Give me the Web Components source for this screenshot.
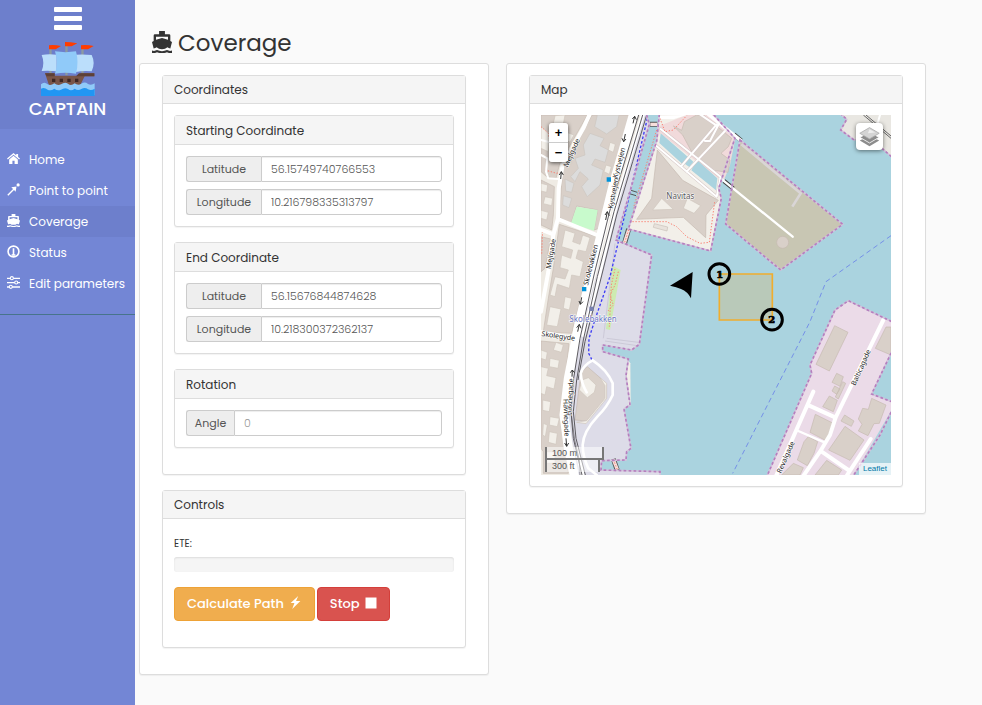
<!DOCTYPE html>
<html lang="en">
<head>
<meta charset="utf-8">
<meta name="viewport" content="width=device-width, initial-scale=1">
<title>Captain – Coverage</title>
<style>
body { margin: 0; background: #fafafa; color: #333; font: 12px/18px Poppins, Inter, "Open Sans", sans-serif; }
</style>
</head>
<body>
<captain-app></captain-app>
<script>
const define = (name, html, setup) => {
  const template = document.createElement('template');
  template.innerHTML = '<style>*{box-sizing:border-box}</style>' + html;
  customElements.define(name, class extends HTMLElement {
    constructor() {
      super();
      this.attachShadow({ mode: 'open' }).append(template.content.cloneNode(true));
    }
    connectedCallback() { if (setup) setup(this, this.shadowRoot); }
  });
};

const ICONS = {
  home: '<path d="M12 2 0 12l1.600 2L12 5.200 22.400 14 24 12l-3.500-3V3.500h-3.500v2.600z"/><path d="M12 7 4 13.800V22h6v-6h4v6h6v-8.200z"/>',
  route: '<path d="M1.500 22.500 13 11" stroke="currentColor" stroke-width="2.500"/><path d="M8 8l9.500-1.500L16 16z"/><circle cx="20.500" cy="3.500" r="3"/>',
  boat: '<path d="M8.500 0h7v3.500h5q1.500 0 1.500 1.500v6l2 1-2 7q-2 0-3.500-1.200Q16 20 12 20t-6.500-2.200Q4 19 2 19l-2-7 2-1V5q0-1.500 1.500-1.500h5zM4.800 6.200v3.300L12 7.500l7.200 2V6.200z" fill-rule="evenodd"/><path d="M0 21.300q3 1 6-.5 6 2.500 12 0 3 1.500 6 .5V24q-3 .5-6-.8-6 2-12 0-3 1.300-6 .8z"/>',
  status: '<circle cx="12" cy="12" r="10" fill="none" stroke="currentColor" stroke-width="3"/><path d="M10.500 6h3v11h-3zM8.500 17h7v3h-7z"/>',
  sliders: '<path d="M0 3h24v2.500H0zM0 11h24v2.500H0zM0 19h24v2.500H0z"/><g fill="#7386d5" stroke="currentColor" stroke-width="2"><circle cx="9" cy="4" r="2.800"/><circle cx="17" cy="12" r="2.800"/><circle cx="7" cy="20" r="2.800"/></g>',
  bolt: '<path d="M17 0 3 13h7L6 24 21 9h-8z"/>',
  stop: '<path d="M1 1h22v22H1z"/>'
};

define('ui-icon', `
<style>
:host { display: inline-block; width: 13px; height: 13px; flex: none; }
svg { display: block; width: 100%; height: 100%; fill: currentColor; }
</style><svg viewBox="0 0 24 24" preserveAspectRatio="none" aria-hidden="true"></svg>`,
(host, root) => { root.querySelector('svg').innerHTML = ICONS[host.getAttribute('name')] || ''; });

define('side-link', `
<style>
:host { display: block; }
a { display: flex; align-items: center; gap: 9px; height: 31px; padding: 0 7px; color: #fff; text-decoration: none; font-size: 12px; white-space: nowrap; }
:host([active]) a { background: #6d7fcc; }
::slotted(ui-icon) { margin-bottom: 2px; }
</style><a href="#"><slot name="icon"></slot><span><slot></slot></span></a>`,
(host, root) => { if (host.hasAttribute('active')) root.querySelector('a').setAttribute('aria-current', 'page'); });

define('side-bar', `
<style>
:host { display: block; background: #7386d5; color: #fff; }
header { height: 129px; background: #6d7fcc; display: flex; flex-direction: column; align-items: center; padding-top: 7px; }
button { border: 0; background: none; padding: 0; width: 28px; height: 23px; display: flex; flex-direction: column; justify-content: space-between; }
button i { width: 28px; height: 5px; border-radius: 1px; background: #fff; }
.ship { width: 54px; height: 54px; margin-top: 12px; }
h3 { margin: 0; font-size: 18px; line-height: 26px; font-weight: 500; }
nav { padding: 15px 0; border-bottom: 1px solid #47748b; }
</style>
<header>
  <button type="button" aria-label="Toggle menu"><i></i><i></i><i></i></button>
  <svg class="ship" viewBox="0 0 162 162" aria-hidden="true">
    <path d="M25 20h7v80h-7zM73 6h7v94h-7zM121 20h7v80h-7z" fill="#8c9aa0"/>
    <path d="M24 10q16-2 36 2l-16 10H24zM72 0q16 0 37 4L92 13H72zM120 10q18-2 38 2l-17 10h-21z" fill="#ff3d00"/>
    <path d="M2 39q20-4 45-1v50q-25-3-45-1Q12 63 2 39z" fill="#bbdefb"/>
    <path d="M104 38q24-2 48 1 12 24 0 49-25-2-48 2z" fill="#bbdefb"/>
    <path d="M42 28q32 5 63 0 9 33 0 67-32-6-63 0 11-33 0-67z" fill="#90caf9"/>
    <path d="M12 94h29v7h69l10-7h40v9h-29l-18 36H27z" fill="#795548"/>
    <path d="M12 94h29v9H17zM114 94h46v9h-55z" fill="#5d4037"/>
    <path d="M33 110h10v10H33zm23 0h10v10H56zm23 0h10v10H79zm23 0h10v10h-10z" fill="#3e2723"/>
    <path d="M0 127q10-10 20 0 9 5 20-3 10 8 20 3 11-8 21-2 9 8 20-1 10 8 20 1 11-7 20 1 10 5 20-2v36H0z" fill="#90caf9"/>
    <path d="M0 140q10-5 20 3 9 5 20-3 10 8 20 3 11-8 21-2 9 8 20-1 10 8 20 1 11-7 20 1 10 5 20-2v22H0z" fill="#2196f3"/>
  </svg>
  <h3>CAPTAIN</h3>
</header>
<nav>
  <side-link><ui-icon slot="icon" name="home"></ui-icon>Home</side-link>
  <side-link><ui-icon slot="icon" name="route"></ui-icon>Point to point</side-link>
  <side-link active><ui-icon slot="icon" name="boat"></ui-icon>Coverage</side-link>
  <side-link><ui-icon slot="icon" name="status"></ui-icon>Status</side-link>
  <side-link><ui-icon slot="icon" name="sliders"></ui-icon>Edit parameters</side-link>
</nav>`);

define('panel-card', `
<style>
:host { display: block; margin-bottom: 15px; border: 1px solid #ddd; border-radius: 3px; background: #fff; box-shadow: 0 1px 1px rgba(0,0,0,.05); }
:host([plain]) { margin: 0; padding: 11px 22px; }
h2 { margin: 0; padding: 0 11px; height: 28px; line-height: 28px; font-size: 12px; font-weight: 400; color: #333; background: #f5f5f5; border-bottom: 1px solid #ddd; }
:host([nested]) h2 { height: 29px; line-height: 30px; }
.body { padding: 11px; }
:host([plain]) h2 { display: none; }
:host([plain]) .body { padding: 0; }
</style><h2></h2><div class="body"><slot></slot></div>`,
(host, root) => { root.querySelector('h2').textContent = host.getAttribute('heading') || ''; });

define('field-row', `
<style>
:host { display: flex; height: 26px; }
:host(:not(:first-of-type)) { margin-top: 7px; }
label { width: 75px; flex: none; text-align: center; font-size: 11px; line-height: 24px; color: #555; background: #eee; border: 1px solid #ccc; border-right: 0; border-radius: 3px 0 0 3px; }
:host([short]) label { width: 48px; }
input { flex: 1; min-width: 0; margin: 0; padding: 0 9px; border: 1px solid #ccc; border-radius: 0 3px 3px 0; background: #fff; color: #555; font: 300 11px/16px Poppins, Inter, sans-serif; box-shadow: inset 0 1px 1px rgba(0,0,0,.075); outline: 0; }
input::placeholder { color: #999; opacity: 1; }
</style><label for="f"></label><input id="f" type="text">`,
(host, root) => {
  root.querySelector('label').textContent = host.getAttribute('label');
  root.querySelector('input').value = host.getAttribute('value') || '';
  root.querySelector('input').placeholder = host.getAttribute('placeholder') || '';
});

define('action-button', `
<style>
:host { display: block; }
button { display: flex; align-items: center; gap: 5px; height: 34px; padding: 0 12px; border: 1px solid #eea236; border-radius: 4px; background: #f0ad4e; color: #fff; font: 500 13px/20px Poppins, Inter, sans-serif; white-space: nowrap; }
:host([danger]) button { background: #d9534f; border-color: #d43f3a; }
</style><button type="button"><slot></slot></button>`);

define('map-view', `
<style>
:host { display: block; position: relative; height: 360px; overflow: hidden; background: #aad3df; }
.tiles { display: block; width: 100%; height: 100%; }
.zoom { position: absolute; left: 8px; top: 8px; width: 19px; border-radius: 3px; overflow: hidden; box-shadow: 0 1px 4px rgba(0,0,0,.65); }
.zoom button { display: block; width: 19px; height: 19px; padding: 0; border: 0; background: #fff; color: #000; font: bold 13px/19px "Liberation Sans", sans-serif; }
.zoom button + button { height: 20px; border-top: 1px solid #ccc; }
.layers { position: absolute; right: 8px; top: 8px; width: 27px; height: 27px; padding: 3px; border: 0; border-radius: 4px; background: #fff; box-shadow: 0 1px 4px rgba(0,0,0,.5); }
.layers svg { display: block; width: 21px; height: 21px; }
.scale { position: absolute; left: 4px; bottom: 3px; font: 9px/12px "Liberation Sans", sans-serif; color: #555; }
.scale span { display: block; width: 59px; height: 13px; padding: 0 5px; border: 2px solid #777; border-top: 0; background: rgba(255,255,255,.5); }
.scale span + span { width: 55px; height: 12px; border-top: 0; border-bottom: 0; }
a { position: absolute; right: 0; bottom: 0; padding: 0 4px; background: rgba(255,255,255,.7); color: #0078a8; font: 8px/12px "Liberation Sans", sans-serif; text-decoration: none; }
.b { fill: #d9d0c9; stroke: #c6bab1; stroke-width: 2; }
.g { fill: #dcdcdc; stroke: #cbc5c0; stroke-width: 2; }
.l { fill: #f2efe9; stroke: #cfc5bd; stroke-width: 2; }
.r { fill: none; stroke: #fff; stroke-linejoin: round; stroke-linecap: round; }
.coast { fill: none; stroke: #d3c3dc; stroke-width: 5; }
.dash { fill: none; stroke: #b57fbe; stroke-width: 5; stroke-dasharray: 8 7; }
.foot { fill: none; stroke: #fa8072; stroke-width: 3; stroke-dasharray: 4 5; }
text { font-family: "Noto Sans", sans-serif; font-size: 21px; fill: #222; paint-order: stroke; stroke: #fff; stroke-width: 3px; }
.num text { font: bold 30px "DejaVu Serif", serif; fill: #000; stroke: #000; stroke-width: 2px; text-anchor: middle; }
</style>
<svg class="tiles" viewBox="123 180 1050 1080" preserveAspectRatio="xMidYMid slice" role="img" aria-label="Harbour map">
  <defs>
    <path id="west" d="M440 180 448 208 348 555 455 600 418 868 395 885 308 870 308 890 385 912 378 962 390 1050 372 1062 393 1180 380 1190 378 1215 305 1217 303 1245 480 1250V1270"/>
    <path id="nav" d="M478 178 470 258 385 522 632 588 664 430 656 400 702 258 705 250 640 178"/>
    <path id="pier" d="M720 255 1028 508 842 645 677 507z"/>
    <path id="ne" d="M1020 175 1040 193 1022 225 1062 255 1110 248 1180 310"/>
    <path id="east" d="M798 1270 935 955 930 930 1005 765 1045 737 1180 802M1180 880 1115 1017 1180 1042M1180 1058 1140 1140 1055 1270"/>
  </defs>

  <path d="M123 180H440L448 208 348 555 455 600 418 868 395 885 308 870 308 890 385 912 378 962 390 1050 372 1062 393 1180 380 1190 378 1215 305 1217 303 1245 480 1250V1260H123z" fill="#dddce8"/>
  <path d="M384 915 391 925 392 1045 386 1050 378 962z" fill="#f2efe9"/>
  <path d="M123 180H425L340 480 250 800 212 1000 205 1100 235 1260H123z" fill="#efebe4"/>

  <!-- city blocks -->
  <path class="b" d="M123 180H262L205 280V320L180 322 168 370 140 365 123 350z"/>
  <path class="l" d="M123 215 150 235 145 290 123 280zM200 232 222 240 210 262 194 252zM165 182 195 180 190 208 160 205z"/>
  <path class="b" d="M276 180H390L345 335 298 520 282 525 293 465 230 453 213 505 178 488 188 345z"/>
  <path class="g" d="M292 180H357L350 215 320 237 284 215zM270 235 312 250 300 272 325 285 315 322 285 312 275 330 310 345 300 390 262 425 245 395 265 372 240 350 225 380 212 365 235 340 225 310 255 300 250 270zM195 372 222 385 215 412 197 408zM190 422 215 430 207 458 188 450z"/>
  <path class="l" d="M330 262 346 268 340 292 325 285zM318 330 334 335 328 358 312 350z"/>
  <path d="M230 455 293 465 282 527 213 505z" fill="#c8facc"/>
  <path class="b" d="M123 375 163 395 160 480 155 525 123 510z"/>
  <path class="l" d="M123 385 143 390 140 412 123 408zM135 425 158 430 155 452 130 446zM123 466 145 472 140 495 123 490z"/>
  <path class="b" d="M123 545 152 552 135 640 123 650zM178 508 290 545 262 655 215 835 130 830 145 730 160 640z"/>
  <path class="l" d="M195 525 225 535 218 560 240 568 248 540 270 548 258 590 235 585 228 610 250 620 240 665 215 660 208 700 172 688 165 725 150 720 165 665 195 672 205 645 180 638 185 600 212 610 218 585 185 575zM150 755 183 762 172 815 140 810zM195 725 215 730 208 765 190 760z"/>
  <path class="b" d="M123 858 207 866 197 960 185 1040 190 1130 205 1255H130V1190L123 1180z"/>
  <path class="l" d="M168 862 190 870 184 892 160 885zM123 885 142 892 138 915 123 910zM150 910 178 916 174 940 148 935zM123 935 145 940 140 962 168 968 162 1002 140 995 135 1020 123 1015zM128 1035 152 1040 148 1070 128 1066zM150 1085 178 1090 172 1115 148 1110zM130 1105 142 1110 136 1145 128 1140zM148 1130 172 1135 168 1168 145 1162zM140 1190H165V1225H140z"/>
  <path class="b" d="M262 935 300 968 318 990 318 1030 260 1098 225 1095 238 990 245 950z"/>
  <path class="l" d="M246 975 265 968 288 990 283 1012 262 1028 238 1005z"/>
  <path class="l" d="M300 968 320 985V1030L258 1106 230 1102 260 1097 315 1030V992z"/>
  <path d="M337 632 362 645 330 825 318 822z" fill="#cdebb0"/>
  <path class="foot" d="M345 642 334 690 328 815M355 650 345 690 330 720 340 750 322 770"/>
  <path d="M320 850 415 862M315 858 412 872M345 565 310 850" fill="none" stroke="#c3bfce" stroke-width="2"/>
  <path class="foot" d="M123 215 145 235 152 270M135 345 170 355 185 350M128 520 125 600"/>

  <!-- streets -->
  <path class="r" stroke-width="12" d="M268 180 250 220 188 330 176 400 174 490 160 540 145 650 123 770M174 492 290 540M123 524 160 538M123 832 212 848"/>
  <path class="r" stroke-width="6" d="M123 300 142 310 138 350 145 370 175 372M123 255 150 262"/>
  <path class="r" stroke-width="27" d="M402 172 340 388 272 665 235 815 205 970 192 1080 205 1180 225 1270"/>
  <path class="r" stroke-width="12" d="M428 180 350 440 290 690 250 840M250 1270 230 1180"/>
  <g fill="none" stroke="#5d5b60" stroke-width="3">
    <path d="M416 180 330 465 282 660 240 850 221 970 213 1070 220 1150 246 1260"/>
    <path d="M428 180 342 470 292 665 250 855 230 975 220 1070 228 1150 256 1260"/>
    <path d="M440 180 398 320 350 480 298 690 255 860 234 975"/>
    <path d="M213 1070 224 1155 238 1215 240 1260" stroke-width="2"/>
  </g>
  <path d="M442 190 398 380 330 665 288 785 267 850 266 895 276 915" fill="none" stroke="#3c3cf5" stroke-width="4" stroke-dasharray="8 6"/>
  <path class="r" stroke-width="8" d="M278 916Q322 945 338 985V1020Q322 1055 292 1085 250 1130 248 1170 248 1205 265 1240L290 1260M278 916Q250 930 242 955 244 985 260 1012"/>
  <path d="M340 1212 352 1246M386 522 373 567M450 208H472" stroke="#555" stroke-width="15"/>
  <path d="M340 1214 352 1244M386 524 373 565M451 208H471" stroke="#f6dfdc" stroke-width="10"/>
  <path class="foot" d="M340 1214 352 1244M386 524 373 565"/>

  <!-- Navitas quay -->
  <path d="M478 180H640L705 250 702 258 656 400 664 430 632 588 385 522 470 258z" fill="#f2efe9"/>
  <path d="M470 255 472 215 560 180H640L705 255 690 330 672 375 655 370 480 235z" fill="#f1dadb"/>
  <path d="M475 182 560 180 520 193 475 192z" fill="#fff"/>
  <path class="b" d="M520 213 545 226 553 200 590 180H610L695 250 685 275 663 295 690 315 684 352 640 346 580 300 548 240z"/>
  <path d="M482 235 563 305 548 328 478 264zM568 310 580 320 568 336 554 326zM590 314 652 370 648 406 574 346z" fill="#aad3df"/>
  <path class="r" style="stroke:#d6c8c8" stroke-width="9" d="M650 208 545 332M675 228 560 350M600 178 650 212M655 210 630 258 615 258M482 222 662 366 650 425M466 270 650 425"/>
  <path class="r" stroke-width="6" d="M650 208 545 332M675 228 560 350M600 178 650 212M655 210 630 258 615 258M482 222 662 366 650 425M466 270 650 425"/>
  <path class="b" d="M472 285 548 376 655 436 618 480 617 548 550 487 410 493 455 430z"/>
  <path class="l" d="M485 430 520 463 458 465zM562 430 602 452 582 475 550 460z"/>
  <path d="M463 506 503 516 501 528 460 517z" fill="#e8e2dc" stroke="#c9c0b8" stroke-width="2"/>
  <path class="foot" d="M462 285 390 500 500 500 530 515 560 545 600 565 628 562 644 440M480 190 495 230 520 225 560 182M470 225 400 460"/>
  <path d="M390 405 412 412M385 415 408 422" stroke="#555" stroke-width="3"/>

  <!-- breakwater -->
  <use href="#pier" fill="#c8c6b3"/>
  <path d="M724 268 902 415 877 455" fill="none" stroke="#d9d5d6" stroke-width="8"/>
  <path d="M672 378 700 401M702 238 724 257" stroke="#444" stroke-width="13"/>
  <path class="r" stroke-width="10" d="M625 178 722 256"/>
  <path class="r" stroke-width="7" d="M662 370 878 545"/>
  <circle cx="848" cy="562" r="18" class="b"/>

  <!-- north-east corner -->
  <path d="M1020 180 1040 193 1022 225 1062 255 1110 248 1173 305V180z" fill="#e9e7e2"/>
  <path d="M1090 180 1173 250M1098 180 1173 243" stroke="#666" stroke-width="3"/>
  <path class="r" stroke-width="6" d="M1140 180 1130 215"/>

  <!-- eastern docks -->
  <path d="M803 1260 935 955 930 930 1005 765 1045 737 1173 798V890L1115 1017 1173 1040V1068L1062 1260z" fill="#ebdbe8"/>
  <path class="b" d="M1004 812 1044 832 988 948 948 928zM1158 816H1173V900L1126 880zM1010 955 1030 965 1020 994 996 982zM1028 980 1037 985 1015 1032 1006 1026zM1004 993 1020 1002 1010 1018 996 1008zM988 1023 1012 1036 1000 1070 968 1055zM946 1078 998 1104 980 1158 930 1132zM1034 1080 1062 1098 1054 1114 1023 1098zM1115 1030 1158 1050 1138 1105 1122 1106 1104 1142 1075 1128 1086 1108 1075 1092 1088 1060 1105 1063zM1035 1114 1092 1155 1050 1216 986 1185zM925 1145 953 1160 942 1195 922 1232 892 1215 912 1160zM880 1225 910 1238 900 1260H845zM980 1216 1025 1245 1015 1260H945z"/>
  <path class="r" stroke-width="12" d="M1150 795 1007 1087 990 1140 960 1190 905 1270M940 1010 825 1270M928 1052 1007 1088M965 1190 1045 1245M1112 1152 1035 1270"/>
  <path class="r" stroke-width="7" d="M895 1128 975 1163"/>

  <g><use href="#west" class="coast"/><use href="#nav" class="coast"/><use href="#pier" class="coast"/><use href="#ne" class="coast"/><use href="#east" class="coast"/></g>
  <g><use href="#west" class="dash"/><use href="#nav" class="dash"/><use href="#pier" class="dash"/><use href="#ne" class="dash"/><use href="#east" class="dash"/></g>
  <path d="M1173 542 978 680 930 800 698 1255" fill="none" stroke="#7590e8" stroke-width="3" stroke-dasharray="15 10"/>

  <!-- one-way arrows and stops -->
  <g fill="none" stroke="#333" stroke-width="3">
    <path d="M399 205 404 184M397 192 404 184 409 194M376 237 371 260M366 250 371 260 378 252M317 495 322 470M315 480 322 470 328 482M245 727 241 748M237 738 241 748 249 740M233 830 238 808M230 818 238 808 243 820M216 965 217 945M211 953 217 945 223 953M198 1150 200 1174M194 1164 200 1174 206 1164M182 372 184 350M178 360 184 350 190 360"/>
  </g>
  <path d="M320 367h13v13h-13zM246 696h13v13h-13z" fill="#0092da"/>
  <path d="M268 755h13v13h-13z" fill="#7981b0"/>

  <text x="499" y="431" style="font-size:24px;fill:#555">Navitas</text>
  <text x="208" y="801" style="fill:#6670c0;font-size:24px">Skolebakken</text>
  <text transform="translate(352 371) rotate(-75)">Kystvejen</text>
  <text transform="translate(338 462) rotate(-79)">Kystvejen</text>
  <text transform="translate(264 692) rotate(-76)">Skolebakken</text>
  <text transform="translate(203 338) rotate(-66)">Mejlgade</text>
  <text transform="translate(152 643) rotate(-80)">Mejlgade</text>
  <text transform="translate(124 843) rotate(8)">Skolegyde</text>
  <text transform="translate(213 1083) rotate(-86)">Havnegade</text>
  <text transform="translate(190 1032) rotate(88)">Havnegade</text>
  <text transform="translate(1066 993) rotate(-66)">Balticagade</text>
  <text transform="translate(843 1256) rotate(-66)">Revalgade</text>

  <!-- survey area -->
  <path d="M658 657H817V795H658z" fill="#f5a623" fill-opacity=".2" stroke="#f0ad2e" stroke-width="5"/>
  <path d="M510 692 578 651 573 730Q563 710 543 702 530 696 510 692z"/>
  <g class="num">
    <circle cx="658" cy="657" r="31" fill="none" stroke="#000" stroke-width="9"/>
    <circle cx="816" cy="794" r="31" fill="none" stroke="#000" stroke-width="9"/>
    <text x="659" y="668">1</text><text x="815" y="805">2</text>
  </g>
</svg>
<div class="zoom"><button type="button" aria-label="Zoom in">+</button><button type="button" aria-label="Zoom out">−</button></div>
<button class="layers" type="button" aria-label="Layers">
  <svg viewBox="0 0 26 26" aria-hidden="true"><path d="M13 12 25 18 13 25 1 18z" fill="#8c8c8c"/><path d="M13 8 25 14 13 21 1 14z" fill="#8c8c8c" stroke="#fff"/><path d="M13 2 25 9 13 16 1 9z" fill="#d4d4d4" stroke="#aaa"/><path d="M13 4 20 8 11 9z" fill="#eee"/></svg>
</button>
<div class="scale"><span>100 m</span><span>300 ft</span></div>
<a href="#">Leaflet</a>`);

define('captain-app', `
<style>
:host { display: grid; grid-template-columns: 135px minmax(0, 1fr); min-height: 100vh; }
main { padding: 27px 56px 28px 4px; }
h1 { display: flex; align-items: center; gap: 6px; margin: 0 0 4px 13px; font-size: 23px; line-height: 32px; font-weight: 400; color: #333; }
h1 ui-icon { width: 20px; height: 22px; margin-bottom: 2px; }
.columns { display: grid; grid-template-columns: minmax(0, 5fr) minmax(0, 6fr); gap: 17px; align-items: start; }
.eta { display: flex; flex-direction: column; gap: 3px; padding-top: 4px; }
.eta label { font-size: 10px; line-height: 20px; }
progress { appearance: none; display: block; width: 100%; height: 15px; border: 0; border-radius: 3px; background: #f5f5f5; box-shadow: inset 0 1px 2px rgba(0,0,0,.1); overflow: hidden; }
progress::-webkit-progress-bar { background: transparent; }
.actions { display: flex; gap: 2px; padding: 15px 0; }
.actions ui-icon { margin-bottom: 3px; }
.stop { width: 12px; height: 12px; }
</style>
<side-bar></side-bar>
<main>
  <h1><ui-icon name="boat"></ui-icon><span>Coverage</span></h1>
  <div class="columns">
    <panel-card plain>
      <panel-card heading="Coordinates">
        <panel-card nested heading="Starting Coordinate">
          <field-row label="Latitude" value="56.15749740766553"></field-row>
          <field-row label="Longitude" value="10.216798335313797"></field-row>
        </panel-card>
        <panel-card nested heading="End Coordinate">
          <field-row label="Latitude" value="56.15676844874628"></field-row>
          <field-row label="Longitude" value="10.218300372362137"></field-row>
        </panel-card>
        <panel-card nested heading="Rotation">
          <field-row short label="Angle" placeholder="0"></field-row>
        </panel-card>
      </panel-card>
      <panel-card heading="Controls">
        <div class="eta"><label for="ete">ETE:</label><progress id="ete" value="0" max="100"></progress></div>
        <div class="actions">
          <action-button>Calculate Path <ui-icon name="bolt"></ui-icon></action-button>
          <action-button danger>Stop <ui-icon class="stop" name="stop"></ui-icon></action-button>
        </div>
      </panel-card>
    </panel-card>
    <panel-card plain>
      <panel-card heading="Map"><map-view></map-view></panel-card>
    </panel-card>
  </div>
</main>`);
</script>
</body>
</html>
